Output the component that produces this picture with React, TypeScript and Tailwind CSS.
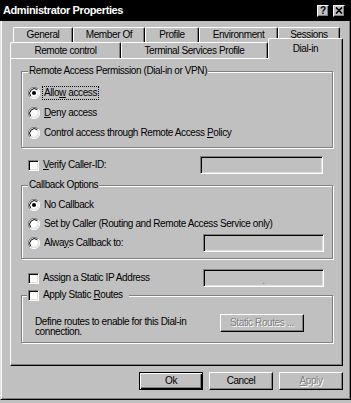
import React from "react";

function Radio({ checked = false }: { checked?: boolean }) {
  return (
    <svg width="12" height="12" viewBox="0 0 12 12" className="shrink-0">
      <circle cx="6" cy="6" r="5" fill="#fff" />
      <path d="M1.9 10.1 A5.8 5.8 0 0 1 10.1 1.9" stroke="#808080" strokeWidth="1" fill="none" />
      <path d="M2.7 9.3 A4.7 4.7 0 0 1 9.3 2.7" stroke="#000" strokeWidth="1" fill="none" />
      <path d="M10.1 1.9 A5.8 5.8 0 0 1 1.9 10.1" stroke="#fff" strokeWidth="1" fill="none" />
      <path d="M9.3 2.7 A4.7 4.7 0 0 1 2.7 9.3" stroke="#dfdfdf" strokeWidth="1" fill="none" />
      {checked && <circle cx="6" cy="6" r="2" fill="#000" />}
    </svg>
  );
}

function Check() {
  return (
    <div className="w-[11px] h-[11px] shrink-0 bg-white border border-t-[#808080] border-l-[#808080] border-r-white border-b-white shadow-[inset_1px_1px_#000,inset_-1px_-1px_#dfdfdf]" />
  );
}

function Field({ children }: { children?: React.ReactNode }) {
  return (
    <div className="w-full h-full bg-[#c0c0c0] border border-t-[#808080] border-l-[#808080] border-r-white border-b-white shadow-[inset_1px_1px_#000,inset_-1px_-1px_#dfdfdf] flex items-center justify-center">
      {children}
    </div>
  );
}

function Tab({ w, children }: { w: string; children: React.ReactNode }) {
  return (
    <div
      className={`${w} h-full flex items-center justify-center border-t border-l border-white border-r border-r-black shadow-[inset_-1px_0_#808080] rounded-tl-[2px] rounded-tr-[2px]`}
    >
      {children}
    </div>
  );
}

export default function App() {
  return (
    <div className="w-[351px] h-[403px] bg-[#c0c0c0] overflow-hidden font-['Liberation_Sans',Arial,sans-serif] text-[10px] tracking-[-0.4px] text-black leading-none">
      {/* Title bar */}
      <div className="h-[21px] bg-black flex items-center pl-[3px] pr-[6px]">
        <span className="text-white font-bold text-[11px] tracking-[-0.4px]">Administrator Properties</span>
        <div className="ml-auto flex gap-[4px]">
          <div className="w-[12px] h-[12px] bg-[#c0c0c0] border border-t-white border-l-white border-r-black border-b-black shadow-[inset_-1px_-1px_#808080] flex items-center justify-center font-bold text-[10px] tracking-normal">
            ?
          </div>
          <div className="w-[12px] h-[12px] bg-[#c0c0c0] border border-t-white border-l-white border-r-black border-b-black shadow-[inset_-1px_-1px_#808080] flex items-center justify-center">
            <svg width="8" height="7" viewBox="0 0 8 7">
              <path d="M1 0.5 L7 6.5 M7 0.5 L1 6.5" stroke="#000" strokeWidth="1.6" />
            </svg>
          </div>
        </div>
      </div>

      {/* Body */}
      <div className="h-[379px] w-[351px] flex flex-col pl-[9px] border-l border-l-[#dfdfdf] border-r border-r-black border-b border-b-black shadow-[inset_1px_0_#fff,inset_-1px_-1px_#808080]">
        {/* Tabs row 1 */}
        <div className="mt-[6px] h-[15px] ml-[3px] flex">
          <Tab w="w-[60px]">General</Tab>
          <Tab w="w-[72px]">Member Of</Tab>
          <Tab w="w-[54px]">Profile</Tab>
          <Tab w="w-[79px]">Environment</Tab>
          <Tab w="w-[62px]">Sessions</Tab>
        </div>
        {/* Tabs row 2 */}
        <div className="h-[16px] flex items-end">
          <Tab w="w-[111px]">Remote control</Tab>
          <Tab w="w-[147px]">Terminal Services Profile</Tab>
          <div className="relative z-10 w-[75px] h-[21px] -mb-px bg-[#c0c0c0] flex items-start justify-center pt-[5px] border-t border-l border-white border-r border-r-black shadow-[inset_-1px_0_#808080] rounded-tl-[2px] rounded-tr-[2px]">
            Dial-in
          </div>
        </div>

        {/* Panel */}
        <div className="w-[333px] h-[308px] border border-white border-r-black border-b-black shadow-[inset_-1px_-1px_#808080] flex flex-col pl-[10px] pr-[9px]">
          {/* Remote Access Permission */}
          <div className="relative mt-[12px] h-[77px] border border-[#808080] shadow-[inset_1px_1px_#fff,1px_1px_#fff] pt-[11px] pl-[6px] flex flex-col">
            <div className="absolute left-[6px] -top-[7px] bg-[#c0c0c0] px-px leading-[12px]">
              Remote Access Permission (Dial-in or VPN)
            </div>
            <div className="h-[20px] flex items-center gap-[2px]">
              <Radio checked />
              <span className="border border-dotted border-black px-px py-[1px]">
                Allo<u>w</u> access
              </span>
            </div>
            <div className="h-[20px] flex items-center gap-[4px]">
              <Radio />
              <span>
                <u>D</u>eny access
              </span>
            </div>
            <div className="h-[20px] flex items-center gap-[4px]">
              <Radio />
              <span>
                Control access through Remote Access <u>P</u>olicy
              </span>
            </div>
          </div>

          {/* Verify Caller-ID */}
          <div className="mt-[8px] h-[18px] flex items-center">
            <div className="ml-[7px]">
              <Check />
            </div>
            <span className="ml-[4px]">
              <u>V</u>erify Caller-ID:
            </span>
            <div className="ml-auto mr-[10px] w-[123px] h-[18px]">
              <Field />
            </div>
          </div>

          {/* Callback Options */}
          <div className="relative mt-[11px] h-[74px] border border-[#808080] shadow-[inset_1px_1px_#fff,1px_1px_#fff] pt-[9px] pl-[6px] flex flex-col">
            <div className="absolute left-[6px] -top-[7px] bg-[#c0c0c0] px-px leading-[12px]">Callback Options</div>
            <div className="h-[19px] flex items-center gap-[4px]">
              <Radio checked />
              <span>No Callback</span>
            </div>
            <div className="h-[19px] flex items-center gap-[4px]">
              <Radio />
              <span>Set by Caller (Routing and Remote Access Service only)</span>
            </div>
            <div className="h-[19px] flex items-center gap-[4px]">
              <Radio />
              <span>
                Alwa<u>y</u>s Callback to:
              </span>
              <div className="ml-auto mr-[8px] w-[121px] h-[18px]">
                <Field />
              </div>
            </div>
          </div>

          {/* Assign static IP */}
          <div className="mt-[10px] h-[18px] flex items-center">
            <div className="ml-[7px]">
              <Check />
            </div>
            <span className="ml-[4px]">Assign a Static IP Address</span>
            <div className="ml-auto mr-[9px] w-[121px] h-[18px]">
              <Field>
                <span className="text-[#808080] mt-[6px]">.</span>
              </Field>
            </div>
          </div>

          {/* Apply Static Routes */}
          <div className="relative mt-[8px] h-[48px] border border-[#808080] shadow-[inset_1px_1px_#fff,1px_1px_#fff] pt-[18px] pl-[13px] flex items-start">
            <div className="absolute left-[5px] -top-[7px] bg-[#c0c0c0] px-px h-[12px] flex items-center gap-[4px] pr-[6px]">
              <Check />
              <span>
                Apply Static <u>R</u>outes
              </span>
            </div>
            <div className="w-[185px] mt-[3px] leading-[10px]">
              Define routes to enable for this Dial-in
              <br />
              connection.
            </div>
            <div className="w-[84px] h-[18px] border border-t-white border-l-white border-r-black border-b-black shadow-[inset_-1px_-1px_#808080] flex items-center justify-center text-[#808080] [text-shadow:1px_1px_#fff]">
              Static Routes ...
            </div>
          </div>
        </div>

        {/* Bottom buttons */}
        <div className="mt-[6px] w-[333px] flex justify-end gap-[6px]">
          <div className="w-[64px] h-[18px] border border-black shadow-[inset_1px_1px_#fff,inset_-1px_-1px_#000,inset_-2px_-2px_#808080] flex items-center justify-center">
            Ok
          </div>
          <div className="w-[64px] h-[18px] border border-t-white border-l-white border-r-black border-b-black shadow-[inset_-1px_-1px_#808080] flex items-center justify-center">
            Cancel
          </div>
          <div className="w-[64px] h-[18px] border border-t-white border-l-white border-r-black border-b-black shadow-[inset_-1px_-1px_#808080] flex items-center justify-center text-[#808080] [text-shadow:1px_1px_#fff]">
            <span>
              <u>A</u>pply
            </span>
          </div>
        </div>
      </div>
    </div>
  );
}
